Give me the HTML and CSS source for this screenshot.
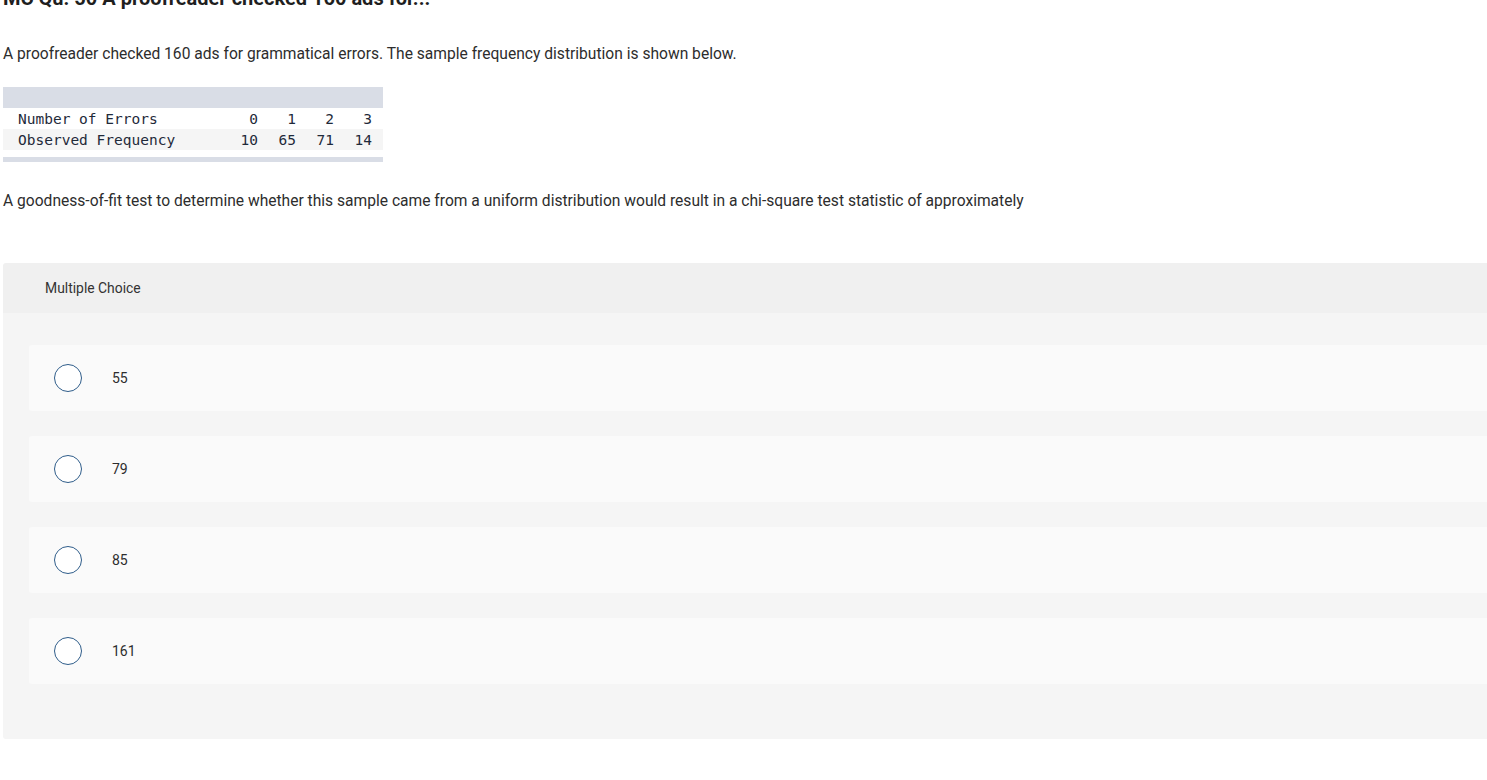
FILE: index.html
```html
<!DOCTYPE html>
<html>
<head>
<meta charset="utf-8">
<link rel="stylesheet" href="styles.css">
</head>
<body>
<div class="page">
  <h2 class="title">MC Qu. 50 A proofreader checked 160 ads for...</h2>
  <p class="prompt first">A proofreader checked 160 ads for grammatical errors. The sample frequency distribution is shown below.</p>
  <div class="freq">
    <div class="freq-head"></div>
    <div class="freq-row">
      <span class="lab">Number of Errors</span><span>0</span><span>1</span><span>2</span><span>3</span>
    </div>
    <div class="freq-row alt">
      <span class="lab">Observed Frequency</span><span>10</span><span>65</span><span>71</span><span>14</span>
    </div>
    <div class="freq-foot"></div>
  </div>
  <p class="prompt second">A goodness-of-fit test to determine whether this sample came from a uniform distribution would result in a chi-square test statistic of approximately</p>
  <div class="panel">
    <div class="panel-head">Multiple Choice</div>
    <div class="panel-body">
      <div class="option"><span class="radio"></span><span class="opt-text">55</span></div>
      <div class="option"><span class="radio"></span><span class="opt-text">79</span></div>
      <div class="option"><span class="radio"></span><span class="opt-text">85</span></div>
      <div class="option"><span class="radio"></span><span class="opt-text">161</span></div>
    </div>
  </div>
</div>
</body>
</html>
```

FILE: styles.css
```css
html, body {
  margin: 0;
  padding: 0;
  background: #ffffff;
  overflow: hidden;
}
.page {
  padding-left: 3px;
  font-family: "Roboto", "Liberation Sans", sans-serif;
  color: #2d2d2d;
}
.title {
  margin: -15px 0 0 0;
  font-size: 20px;
  line-height: 26px;
  font-weight: 700;
  color: #1f1f1f;
}
.prompt {
  margin: 0;
  font-size: 15.6px;
  line-height: 20px;
}
.first {
  margin-top: 33px;
}
.freq {
  margin-top: 23px;
  width: 380px;
}
.freq-head {
  height: 21px;
  background: #d9dde6;
}
.freq-row {
  display: grid;
  grid-template-columns: 1fr repeat(4, 38px);
  height: 21px;
  padding: 0 11px 0 15px;
  align-items: center;
  font-family: "DejaVu Sans Mono", monospace;
  font-size: 14.5px;
  color: #1f2a3a;
}
.freq-row span {
  text-align: right;
}
.freq-row span.lab {
  text-align: left;
}
.freq-row.alt {
  background: #f5f5f5;
}
.freq-foot {
  margin-top: 7px;
  height: 5px;
  background: #d9dde6;
}
.second {
  margin-top: 29px;
}
.panel {
  margin-top: 52px;
  margin-right: -20px;
  border-radius: 3px;
  overflow: hidden;
}
.panel-head {
  height: 50px;
  background: #f0f0f0;
  padding-left: 42px;
  display: flex;
  align-items: center;
  font-size: 13.9px;
  color: #333;
}
.panel-body {
  background: #f5f5f5;
  padding: 32px 0 55px 26px;
  display: flex;
  flex-direction: column;
  gap: 25px;
}
.option {
  height: 66px;
  background: #fafafa;
  border-radius: 3px 0 0 3px;
  display: flex;
  align-items: center;
  padding-left: 25px;
}
.radio {
  width: 26px;
  height: 26px;
  border: 1.5px solid #2f5d8a;
  border-radius: 50%;
  background: #fff;
  box-sizing: content-box;
}
.opt-text {
  margin-left: 30px;
  font-size: 14px;
  color: #2d2d2d;
}
```
